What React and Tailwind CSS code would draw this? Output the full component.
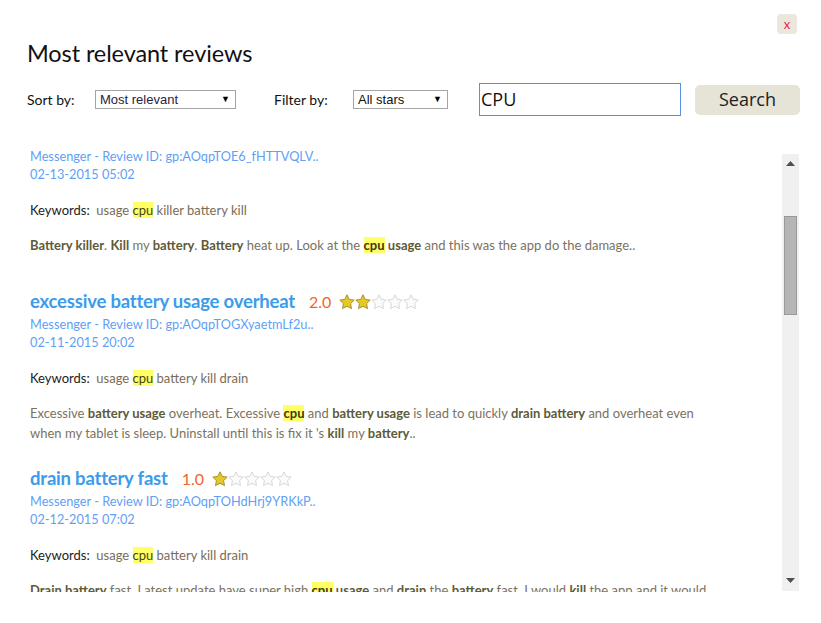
import React from 'react';

const reviews = [
  {
    title: 'battery killer',
    rating: '1.0',
    stars: 1,
    id: 'gp:AOqpTOE6_fHTTVQLV..',
    date: '02-13-2015 05:02',
    keywords: ['usage', 'cpu', 'killer', 'battery', 'kill'],
    text: [
      ['b', 'Battery killer'], ['t', '. '], ['b', 'Kill'], ['t', ' my '], ['b', 'battery'], ['t', '. '],
      ['b', 'Battery'], ['t', ' heat up. Look at the '], ['h', 'cpu'], ['t', ' '], ['b', 'usage'],
      ['t', ' and this was the app do the damage..'],
    ],
    gap: 'mb-[35px]',
  },
  {
    title: 'excessive battery usage overheat',
    rating: '2.0',
    stars: 2,
    id: 'gp:AOqpTOGXyaetmLf2u..',
    date: '02-11-2015 20:02',
    keywords: ['usage', 'cpu', 'battery', 'kill', 'drain'],
    text: [
      ['t', 'Excessive '], ['b', 'battery usage'], ['t', ' overheat. Excessive '], ['h', 'cpu'], ['t', ' and '],
      ['b', 'battery usage'], ['t', ' is lead to quickly '], ['b', 'drain battery'],
      ['t', ' and overheat even when my tablet is sleep. Uninstall until this is fix it \'s '], ['b', 'kill'],
      ['t', ' my '], ['b', 'battery'], ['t', '..'],
    ],
    gap: 'mb-[24px]',
  },
  {
    title: 'drain battery fast',
    rating: '1.0',
    stars: 1,
    id: 'gp:AOqpTOHdHrj9YRKkP..',
    date: '02-12-2015 07:02',
    keywords: ['usage', 'cpu', 'battery', 'kill', 'drain'],
    text: [
      ['b', 'Drain battery'], ['t', ' fast. Latest update have super high '], ['h', 'cpu'], ['t', ' '], ['b', 'usage'],
      ['t', ' and '], ['b', 'drain'], ['t', ' the '], ['b', 'battery'], ['t', ' fast. I would '], ['b', 'kill'],
      ['t', ' the app and it would still run in background and eat the battery..'],
    ],
    gap: 'mb-[24px]',
  },
];

function Star({ on }) {
  return (
    <svg width="16" height="16" viewBox="0 0 16 16">
      <path
        d="M8 0.8l2.2 4.6 5 .7-3.6 3.5.9 5L8 12.2l-4.5 2.4.9-5L.8 6.1l5-.7z"
        fill={on ? '#e6c929' : '#fbfbfb'}
        stroke={on ? '#9c8a1f' : '#d2d2d2'}
        strokeWidth="0.9"
        strokeLinejoin="round"
      />
    </svg>
  );
}

function Review({ r }) {
  return (
    <div className={`pl-[3px] ${r.gap}`}>
      <div className="flex items-center h-6">
        <span className="text-[18.5px] font-bold text-[#3b9bec] tracking-[-0.2px]">{r.title}</span>
        <span className="ml-[14px] text-[16px] text-[#f2642c]">{r.rating}</span>
        <span className="ml-2 flex">
          {[0, 1, 2, 3, 4].map((i) => (
            <Star key={i} on={i < r.stars} />
          ))}
        </span>
      </div>
      <div className="mt-px text-[12.75px] leading-[18px] text-[#5f9ff5]">Messenger - Review ID: {r.id}</div>
      <div className="text-[12.75px] leading-[18px] text-[#5f9ff5]">{r.date}</div>
      <div className="mt-[17px] text-[13px] leading-5 text-[#222]">
        Keywords:&nbsp;{' '}
        {r.keywords.map((k, i) => (
          <span key={i}>
            {k === 'cpu' ? (
              <span className="bg-[#ffff66] text-[#4a3f10]">{k}</span>
            ) : (
              <span className="text-[#7a6c58]">{k}</span>
            )}
            {i < r.keywords.length - 1 ? ' ' : ''}
          </span>
        ))}
      </div>
      <p className="mt-[15px] w-[690px] text-[13px] leading-5 text-[#7b7260]">
        {r.text.map(([kind, s], i) =>
          kind === 'b' ? (
            <b key={i} className="font-bold text-[#5d5a38]">{s}</b>
          ) : kind === 'h' ? (
            <b key={i} className="font-bold bg-[#ffff66] text-[#3f3a10]">{s}</b>
          ) : (
            <span key={i}>{s}</span>
          )
        )}
      </p>
    </div>
  );
}

export default function App() {
  return (
    <div className="w-[821px] h-[623px] bg-white overflow-hidden font-['Lato','Noto_Sans',sans-serif]">
      <div className="flex justify-end pt-[14px] pr-[24px]">
        <button className="w-5 h-5 rounded bg-[#ebe7dd] text-[#e3264c] text-[13px] leading-5 text-center">x</button>
      </div>

      <h1 className="mt-[3px] ml-[27px] text-[23.5px] leading-8 text-[#111] tracking-[-0.1px]">Most relevant reviews</h1>

      <div className="mt-[14px] ml-[27px] h-[33px] flex items-center text-[14px] text-[#111]">
        <span className="w-[68px]">Sort by:</span>
        <div className="w-[141px] h-[19px] border border-[#a5a5a5] flex items-center justify-between px-1 font-['Liberation_Sans',sans-serif] text-[13px] text-[#2a1d40]">
          <span>Most relevant</span>
          <span className="text-[9px] text-black mr-px">▼</span>
        </div>
        <span className="ml-[38px] w-[79px]">Filter by:</span>
        <div className="w-[95px] h-[19px] border border-[#a5a5a5] flex items-center justify-between px-1 font-['Liberation_Sans',sans-serif] text-[13px] text-[#111]">
          <span>All stars</span>
          <span className="text-[9px] text-black mr-px">▼</span>
        </div>
        <div className="ml-[31px] w-[202px] h-[33px] border border-[#5b8ee6] flex items-center px-[1px] text-[18px] text-[#111] font-['Open_Sans',sans-serif]">
          CPU
        </div>
        <button className="ml-[14px] w-[105px] h-[30px] rounded-[5px] bg-[#e6e3d7] text-[18px] text-[#222] font-['Open_Sans',sans-serif]">
          Search
        </button>
      </div>

      <div className="mt-[34px] ml-[27px] w-[772px] h-[442px] flex overflow-hidden">
        <div className="flex-1 overflow-hidden">
          <div className="-mt-[28px]">
            {reviews.map((r, i) => (
              <Review key={i} r={r} />
            ))}
          </div>
        </div>
        <div className="mt-[4px] w-[17px] h-[437px] bg-[#f0f0f0] flex flex-col items-center">
          <svg width="9" height="5" viewBox="0 0 9 5" className="mt-[7px]">
            <path d="M0 5L4.5 0 9 5z" fill="#505050" />
          </svg>
          <div className="mt-[50px] w-[13px] h-[99px] bg-[#b5b5b5] border border-[#999]" />
          <div className="flex-1" />
          <svg width="9" height="5" viewBox="0 0 9 5" className="mb-[8px]">
            <path d="M0 0L4.5 5 9 0z" fill="#505050" />
          </svg>
        </div>
      </div>
    </div>
  );
}
